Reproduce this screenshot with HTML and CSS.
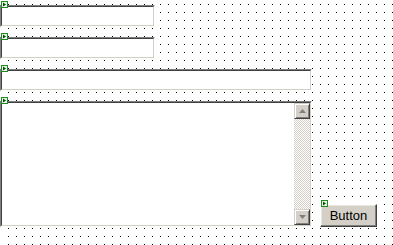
FILE: index.html
```html
<!DOCTYPE html>
<html>
<head>
<meta charset="utf-8">
<link rel="stylesheet" href="styles.css">
</head>
<body>
<div class="surface">
  <div class="ctl tb short">
    <span class="mark"><svg width="7" height="7" viewBox="0 0 7 7"><rect x="0.5" y="0.5" width="6" height="6" fill="#eaf6ea" stroke="#1f8a1f"/><polygon points="2,1.5 5,3.5 2,5.5" fill="#0a4a0a"/></svg></span>
    <div class="in"></div>
  </div>
  <div class="ctl tb short">
    <span class="mark"><svg width="7" height="7" viewBox="0 0 7 7"><rect x="0.5" y="0.5" width="6" height="6" fill="#eaf6ea" stroke="#1f8a1f"/><polygon points="2,1.5 5,3.5 2,5.5" fill="#0a4a0a"/></svg></span>
    <div class="in"></div>
  </div>
  <div class="ctl tb wide">
    <span class="mark"><svg width="7" height="7" viewBox="0 0 7 7"><rect x="0.5" y="0.5" width="6" height="6" fill="#eaf6ea" stroke="#1f8a1f"/><polygon points="2,1.5 5,3.5 2,5.5" fill="#0a4a0a"/></svg></span>
    <div class="in"></div>
  </div>
  <div class="row">
    <div class="ctl tb multi">
      <span class="mark"><svg width="7" height="7" viewBox="0 0 7 7"><rect x="0.5" y="0.5" width="6" height="6" fill="#eaf6ea" stroke="#1f8a1f"/><polygon points="2,1.5 5,3.5 2,5.5" fill="#0a4a0a"/></svg></span>
      <div class="in">
        <div class="scroll">
          <div class="sb-btn"><svg width="7" height="4" viewBox="0 0 7 4"><polygon points="3.5,0 7,4 0,4" fill="#808080"/></svg></div>
          <div class="track"></div>
          <div class="sb-btn"><svg width="7" height="4" viewBox="0 0 7 4"><polygon points="0,0 7,0 3.5,4" fill="#808080"/></svg></div>
        </div>
      </div>
    </div>
    <div class="ctl btn">
      <span class="mark"><svg width="7" height="7" viewBox="0 0 7 7"><rect x="0.5" y="0.5" width="6" height="6" fill="#eaf6ea" stroke="#1f8a1f"/><polygon points="2,1.5 5,3.5 2,5.5" fill="#0a4a0a"/></svg></span>
      <span class="label">Button</span>
    </div>
  </div>
</div>
</body>
</html>
```
FILE: styles.css
```css
html {
  height: 100%;
  background-color: #fff;
  background-image:
    linear-gradient(90deg, #fff 1px, transparent 1px),
    linear-gradient(#fff 7px, transparent 7px),
    linear-gradient(90deg, #000 1px, #fff 1px);
  background-size: 1px 100%, 8px 8px, 8px 8px;
  background-repeat: no-repeat, repeat, repeat;
  background-position: 0 0, 0 5px, 0 0;
}

body {
  margin: 0;
  font-family: "Liberation Sans", Arial, sans-serif;
}

.surface {
  display: flex;
  flex-direction: column;
  align-items: flex-start;
  gap: 10px;
  padding-top: 5px;
}

.ctl {
  position: relative;
  box-sizing: border-box;
}

.mark {
  position: absolute;
  left: 0;
  top: -5px;
  width: 7px;
  height: 7px;
  line-height: 0;
  z-index: 2;
}

.tb {
  background: #fff;
  border: 1px solid;
  border-color: #808080 #ffffff #ffffff #808080;
  height: 22px;
}

.tb .in {
  box-sizing: border-box;
  height: 100%;
  border: 1px solid;
  border-color: #404040 #d4d0c8 #d4d0c8 #404040;
  display: flex;
  justify-content: flex-end;
}

.short { width: 155px; }
.wide { width: 312px; }

.multi {
  width: 312px;
  height: 126px;
}

.row {
  display: flex;
  align-items: flex-end;
  gap: 8px;
}

.scroll {
  width: 16px;
  display: flex;
  flex-direction: column;
}

.sb-btn {
  box-sizing: border-box;
  width: 16px;
  height: 16px;
  background: #d4d0c8;
  border: 1px solid;
  border-color: #d4d0c8 #404040 #404040 #d4d0c8;
  box-shadow: inset 1px 1px #fff, inset -1px -1px #808080;
  display: flex;
  align-items: center;
  justify-content: center;
  line-height: 0;
}

.track {
  flex: 1;
  background-image: repeating-conic-gradient(#d4d0c8 0 25%, #ffffff 0 50%);
  background-size: 2px 2px;
}

.btn {
  width: 57px;
  height: 23px;
  background: #d4d0c8;
  border: 1px solid;
  border-color: #ffffff #404040 #404040 #ffffff;
  box-shadow: inset -1px -1px #808080, inset 1px 1px #e8e6e0;
  display: flex;
  align-items: center;
  justify-content: center;
  font-size: 13px;
  color: #000;
}

.label {
  line-height: 15px;
}
```
